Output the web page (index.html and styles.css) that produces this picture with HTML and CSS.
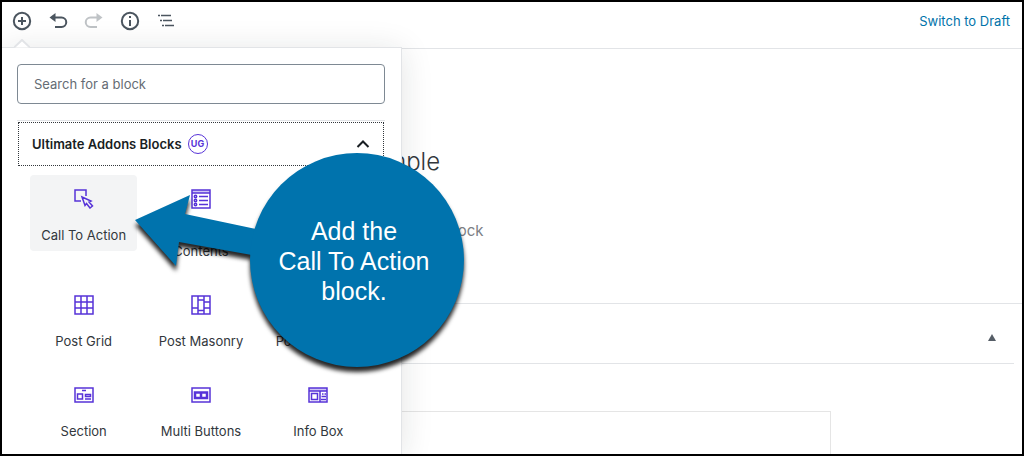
FILE: index.html
```html
<!DOCTYPE html>
<html lang="en">
<head>
  <meta charset="utf-8">
  <title>Edit Post</title>
  <link rel="stylesheet" href="styles.css">
</head>
<body>
  <header class="toolbar">
    <div class="toolbar-left">
      <button class="tool" aria-label="Add block">
        <svg width="20" height="20" viewBox="0 0 20 20"><circle cx="10" cy="10" r="8.2"/><path d="M10 6v8M6 10h8"/></svg>
      </button>
      <button class="tool" aria-label="Undo">
        <svg width="20" height="20" viewBox="0 0 20 20"><path d="M6 6.500h7.500a4.500 4.500 0 0 1 0 9.500H7"/><path class="fill" d="M7.500 2v9L1.500 6.500z"/></svg>
      </button>
      <button class="tool" aria-label="Redo" disabled>
        <svg width="20" height="20" viewBox="0 0 20 20"><path d="M14 6.500H6.500a4.500 4.500 0 0 0 0 9.500H13"/><path class="fill" d="M12.500 2v9L18.500 6.500z"/></svg>
      </button>
      <button class="tool" aria-label="Content structure">
        <svg width="20" height="20" viewBox="0 0 20 20"><circle cx="10" cy="10" r="8.200"/><path d="M10 9v6M10 5v2"/></svg>
      </button>
      <button class="tool" aria-label="Block navigation">
        <svg class="thin" width="20" height="20" viewBox="0 0 20 20"><path d="M5 4.500h10M7 9.500h9M9 14.500h9M2 4.500h2M4 9.500h2M6 14.500h2"/></svg>
      </button>
    </div>
    <a class="draft" href="#">Switch to Draft</a>
  </header>

  <main class="editor">
    <div class="column post">
      <h1>Call to Action Sample</h1>
      <p>Start writing or type / to choose a block</p>
    </div>
    <section class="metabox">
      <div class="metabox-head">
        <button class="toggle" aria-label="Toggle panel">
          <svg width="8" height="7" viewBox="0 0 8 7"><path d="M4 0l4 7H0z"/></svg>
        </button>
      </div>
      <div class="column metabox-inner"></div>
    </section>
  </main>

  <aside class="inserter">
    <svg class="notch" width="16" height="9" viewBox="0 0 16 9"><path d="M0 8.500L8 1l8 7.500"/></svg>
    <div class="inserter-content">
      <input class="search" type="text" placeholder="Search for a block" aria-label="Search for a block">
      <div class="panel">
        <button class="panel-title">
          <span>Ultimate Addons Blocks</span>
          <span class="ug">UG</span>
          <svg class="chevron" width="14" height="10" viewBox="0 0 14 10"><path d="M1.500 8L7 2.500 12.500 8"/></svg>
        </button>
      </div>
      <div class="blocks">
        <button class="block active">
          <svg width="20" height="20" viewBox="0 0 20 20"><path d="M7 12H1V1h11v6"/><path d="M8 8l3 8.500 1.500-2 3.500 4.500 2.500-2-3.500-4 2-1z"/></svg>
          <span>Call To Action</span>
        </button>
        <button class="block">
          <svg width="20" height="20" viewBox="0 0 20 20"><path class="tint" d="M1 1h18v3H1z"/><path d="M1 1h18v18H1zM1 4h18M8 7.500h9M8 11.500h9M8 15.500h9"/><circle cx="4.500" cy="7.500" r="1.200"/><circle cx="4.500" cy="11.500" r="1.200"/><circle cx="4.500" cy="15.500" r="1.200"/></svg>
          <span>Table Of Contents</span>
        </button>
        <button class="block first">
          <svg width="20" height="20" viewBox="0 0 20 20"><path d="M1 1h18v18H1zM7 1v18M13 1v18M1 7h18M1 13h18"/></svg>
          <span>Post Grid</span>
        </button>
        <button class="block">
          <svg width="20" height="20" viewBox="0 0 20 20"><path d="M1 1h18v18H1zM7 1v18M13 1v18M1 13h6M7 5h6M7 15.500h6M13 7h6M13 13h6"/></svg>
          <span>Post Masonry</span>
        </button>
        <button class="block">
          <svg width="20" height="20" viewBox="0 0 20 20"><path d="M1 3h18v14H1zM6 3v14M14 3v14"/></svg>
          <span>Post Carousel</span>
        </button>
        <button class="block">
          <svg width="20" height="20" viewBox="0 0 20 20"><path d="M1 3h18v14H1zM8 5.500h4"/><path d="M3.500 9h5v5h-5zM11.500 9.500h5v2h-5zM11 14h6"/></svg>
          <span>Section</span>
        </button>
        <button class="block">
          <svg width="20" height="20" viewBox="0 0 20 20"><path d="M1 3h18v14H1z"/><path class="thick" d="M4 7.500h12v5.500H4zM10 7.500v5.500"/></svg>
          <span>Multi Buttons</span>
        </button>
        <button class="block">
          <svg width="20" height="20" viewBox="0 0 20 20"><path class="tint" d="M1 3h18v3H1z"/><path d="M1 3h18v14H1zM1 6h18M12 6v11"/><path d="M3.500 8.500h6v6h-6zM14 9h1.500M16.500 9H18M13.500 11.500H18M13 14.500h5"/></svg>
          <span>Info Box</span>
        </button>
      </div>
    </div>
  </aside>

  <div class="callout">
    <svg class="callout-shape" width="330" height="216" viewBox="0 0 330 216">
      <path d="M0 67L55 42 50 61 140 80V106L44 89 41 113z"/>
      <circle cx="222" cy="107" r="107"/>
    </svg>
    <p class="callout-text">Add the<br>Call To Action<br>block.</p>
  </div>
</body>
</html>
```
FILE: styles.css
```css
* {
  box-sizing: border-box;
}
body {
  position: relative;
  display: flex;
  flex-direction: column;
  height: 100vh;
  margin: 0;
  border: 2px solid #000;
  overflow: hidden;
  background: #fff;
  color: #32373c;
  font-family: Inter, "Liberation Sans", sans-serif;
  font-size: 13px;
}
button {
  padding: 0;
  border: 0;
  background: none;
  color: inherit;
  font: inherit;
}
svg {
  display: block;
  fill: none;
}

/* top bar */
.toolbar {
  display: flex;
  flex-shrink: 0;
  align-items: center;
  justify-content: space-between;
  height: 47px;
  padding: 0 12px 8px 10px;
  border-bottom: 1px solid #e2e4e7;
}
.toolbar-left {
  display: flex;
  gap: 16px;
}
.tool svg {
  stroke: #4b555f;
  stroke-width: 2;
}
.tool .fill {
  fill: #4b555f;
  stroke: none;
}
.tool .thin {
  stroke-width: 1.5;
}
.tool:disabled {
  opacity: .35;
}
.draft {
  color: #0073aa;
  text-decoration: none;
}

/* editor */
.editor {
  flex: 1;
  min-height: 0;
}
.column {
  width: 638px;
  max-width: 100%;
  margin: 0 auto;
}
.post {
  height: 254px;
  padding: 97px 10px 0;
}
.post h1 {
  margin: 0;
  font-size: 24px;
  line-height: 32px;
  font-weight: 300;
}
.post p {
  margin: 43px 0 0;
  color: #7c8085;
  font-size: 15px;
  line-height: 20px;
}
.metabox {
  border-top: 1px solid #e2e4e7;
}
.metabox-head {
  display: flex;
  align-items: center;
  justify-content: flex-end;
  height: 60px;
  margin-right: 8px;
  padding: 8px 18px 0 0;
  border-bottom: 1px solid #e2e4e7;
}
.toggle svg {
  fill: #555d66;
}
.metabox-inner {
  height: 60px;
  margin-top: 47px;
  border: 1px solid #e5e5e5;
}

/* block inserter */
.inserter {
  position: absolute;
  top: 45px;
  bottom: 0;
  left: 0;
  width: 400px;
  border: solid #e2e4e7;
  border-width: 1px 1px 0 0;
  background: #fff;
  box-shadow: 0 3px 30px rgba(25, 30, 35, .12);
}
.notch {
  position: absolute;
  top: -9px;
  left: 12px;
  fill: #fff;
  stroke: #e2e4e7;
  stroke-width: 2;
}
.inserter-content {
  height: 100%;
  padding: 16px 16px 0 15px;
  overflow: hidden;
}
.search {
  display: block;
  width: 100%;
  height: 40px;
  padding: 0 16px;
  border: 1px solid #7e8993;
  border-radius: 4px;
  font: inherit;
}
.search::placeholder {
  color: #656c74;
  opacity: 1;
}
.panel {
  margin-top: 16px;
  padding: 1px;
  border-top: 1px solid #e2e4e7;
}
.panel-title {
  display: flex;
  align-items: center;
  width: 100%;
  height: 44px;
  padding: 0 13px;
  border: 1px dotted #32373c;
  color: #191e23;
  font-weight: 600;
}
.ug {
  flex: none;
  width: 20px;
  height: 20px;
  margin-left: 6px;
  border: 1px solid #5733d8;
  border-radius: 50%;
  color: #5733d8;
  font-size: 9px;
  font-weight: 700;
  line-height: 18px;
}
.chevron {
  margin-left: auto;
  stroke: #191e23;
  stroke-width: 2;
}
.blocks {
  display: grid;
  grid-template-columns: repeat(3, 1fr);
  gap: 14px 10px;
  align-items: start;
  padding: 8px 13px 0;
}
.block {
  display: flex;
  flex-direction: column;
  align-items: center;
  gap: 18px;
  min-height: 76px;
  padding: 14px 8px 8px;
  border-radius: 4px;
  line-height: 16px;
}
.block.active {
  background: #f3f4f5;
}
.block.first {
  grid-column: 1;
}
.block svg {
  stroke: #5733d8;
  stroke-width: 1.5;
}
.block .tint {
  fill: #cfc6f4;
  stroke: none;
}
.block .thick {
  stroke-width: 2.5;
}

/* callout */
.callout {
  position: absolute;
  top: 151px;
  left: 133px;
}
.callout-shape {
  overflow: visible;
  fill: #0073ad;
  filter: drop-shadow(0 5px 2px rgba(0, 0, 0, .85));
}
.callout-text {
  position: absolute;
  top: 63px;
  left: 112px;
  width: 214px;
  margin: 0;
  color: #fff;
  font-family: "Liberation Sans", sans-serif;
  font-size: 25px;
  line-height: 30px;
  text-align: center;
}
```
